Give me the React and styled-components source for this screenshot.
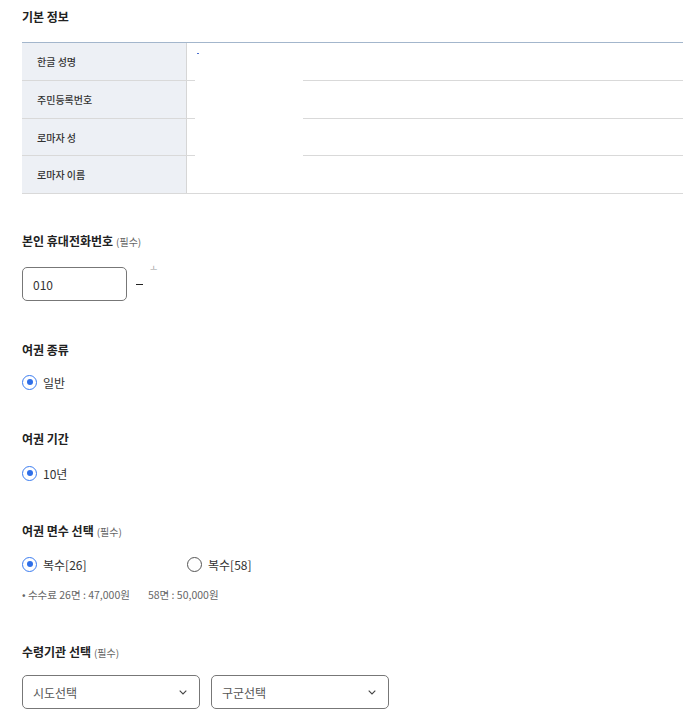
import styled, { createGlobalStyle } from 'styled-components'

const Global = createGlobalStyle`
  body {
    margin: 0;
    background: #fff;
    font-family: "Noto Sans CJK KR", "Noto Sans", sans-serif;
    color: #222;
  }
`

const Page = styled.div`
  padding: 8px 11px 0 22px;
`

const Title = styled.div`
  display: flex;
  align-items: baseline;
  height: 18px;
  font-size: 12px;
  line-height: 18px;
  font-weight: 700;
  color: #222;
  margin-top: ${p => p.$mt || 0}px;
`

const Req = styled.span`
  font-size: 10px;
  line-height: 18px;
  font-weight: 400;
  color: #666;
  margin-left: 3px;
`

const Table = styled.div`
  position: relative;
  margin-top: 16px;
  border-top: 1px solid #a3b6cc;
`

const Row = styled.div`
  display: grid;
  grid-template-columns: 165px 1fr;
  height: ${p => p.$h}px;
  border-bottom: 1px solid #d9d9d9;
`

const Th = styled.div`
  display: flex;
  align-items: center;
  padding-left: 15px;
  background: #edf0f5;
  border-right: 1px solid #d6d6d6;
  font-size: 10px;
  font-weight: 500;
  color: #333;
`

const Td = styled.div`
  background: #fff;
`

// 가려진 입력 영역 (흰 덮개)
const Cover = styled.div`
  position: absolute;
  left: 173px;
  top: 8px;
  width: 108px;
  height: 130px;
  background: #fff;
`

const Caret = styled.span`
  position: absolute;
  left: 2px;
  top: 2px;
  width: 2px;
  height: 1px;
  background: #4a6fd0;
`

const PhoneRow = styled.div`
  display: flex;
  align-items: center;
  height: 34px;
  margin-top: 17px;
`

const Input = styled.div`
  box-sizing: border-box;
  width: 105px;
  height: 34px;
  border: 1px solid #777;
  border-radius: 5px;
  padding-left: 10px;
  display: flex;
  align-items: center;
  font-size: 12px;
  color: #333;
`

const Dash = styled.span`
  margin-left: 9px;
  width: 7px;
  height: 1px;
  background: #222;
`

const Tiny = styled.span`
  align-self: flex-start;
  margin-left: 7px;
  margin-top: -3px;
  font-size: 8px;
  line-height: 8px;
  color: #999;
`

const RadioRow = styled.div`
  display: grid;
  grid-template-columns: 165px auto;
  justify-content: start;
  margin-top: ${p => p.$mt}px;
`

const Radio = styled.label`
  display: flex;
  align-items: center;
  gap: 6px;
  height: 18px;
  font-size: 12px;
  color: #333;
`

const Circle = styled.span`
  box-sizing: border-box;
  width: 15px;
  height: 15px;
  border-radius: 50%;
  border: ${p => (p.$on ? '1.5px solid #3b7cf0' : '1px solid #555')};
  display: flex;
  align-items: center;
  justify-content: center;
  &::after {
    content: '';
    width: 6px;
    height: 6px;
    border-radius: 50%;
    background: ${p => (p.$on ? '#2f6fe8' : 'transparent')};
  }
`

const Fee = styled.div`
  display: flex;
  gap: 18px;
  margin-top: 15px;
  font-size: 10.5px;
  line-height: 14px;
  color: #666;
`

const Selects = styled.div`
  display: flex;
  gap: 11px;
  margin-top: 14px;
`

const Select = styled.div`
  box-sizing: border-box;
  width: 178px;
  height: 34px;
  border: 1px solid #777;
  border-radius: 5px;
  padding: 0 12px 0 10px;
  display: flex;
  align-items: center;
  justify-content: space-between;
  font-size: 12px;
  color: #555;
`

const Chevron = () => (
  <svg width="8" height="5" viewBox="0 0 8 5">
    <path d="M0.7 0.7 L4 4 L7.3 0.7" fill="none" stroke="#444" strokeWidth="1.1" />
  </svg>
)

const rows = [
  ['한글 성명', 37],
  ['주민등록번호', 37],
  ['로마자 성', 36],
  ['로마자 이름', 37],
]

const App = () => {
  return (
    <Page>
      <Global />
      <Title>기본 정보</Title>
      <Table>
        {rows.map(([r, h]) => (
          <Row key={r} $h={h}>
            <Th>{r}</Th>
            <Td />
          </Row>
        ))}
        <Cover>
          <Caret />
        </Cover>
      </Table>

      <Title $mt={38}>
        본인 휴대전화번호<Req>(필수)</Req>
      </Title>
      <PhoneRow>
        <Input>010</Input>
        <Dash />
        <Tiny>ㅗ</Tiny>
      </PhoneRow>

      <Title $mt={40}>여권 종류</Title>
      <RadioRow $mt={14}>
        <Radio>
          <Circle $on />
          일반
        </Radio>
      </RadioRow>

      <Title $mt={39}>여권 기간</Title>
      <RadioRow $mt={16}>
        <Radio>
          <Circle $on />
          10년
        </Radio>
      </RadioRow>

      <Title $mt={40}>
        여권 면수 선택<Req>(필수)</Req>
      </Title>
      <RadioRow $mt={15}>
        <Radio>
          <Circle $on />
          복수[26]
        </Radio>
        <Radio>
          <Circle />
          복수[58]
        </Radio>
      </RadioRow>
      <Fee>
        <span>• 수수료 26면 : 47,000원</span>
        <span>58면 : 50,000원</span>
      </Fee>

      <Title $mt={41}>
        수령기관 선택<Req>(필수)</Req>
      </Title>
      <Selects>
        <Select>
          시도선택
          <Chevron />
        </Select>
        <Select>
          구군선택
          <Chevron />
        </Select>
      </Selects>
    </Page>
  )
}

export default App
